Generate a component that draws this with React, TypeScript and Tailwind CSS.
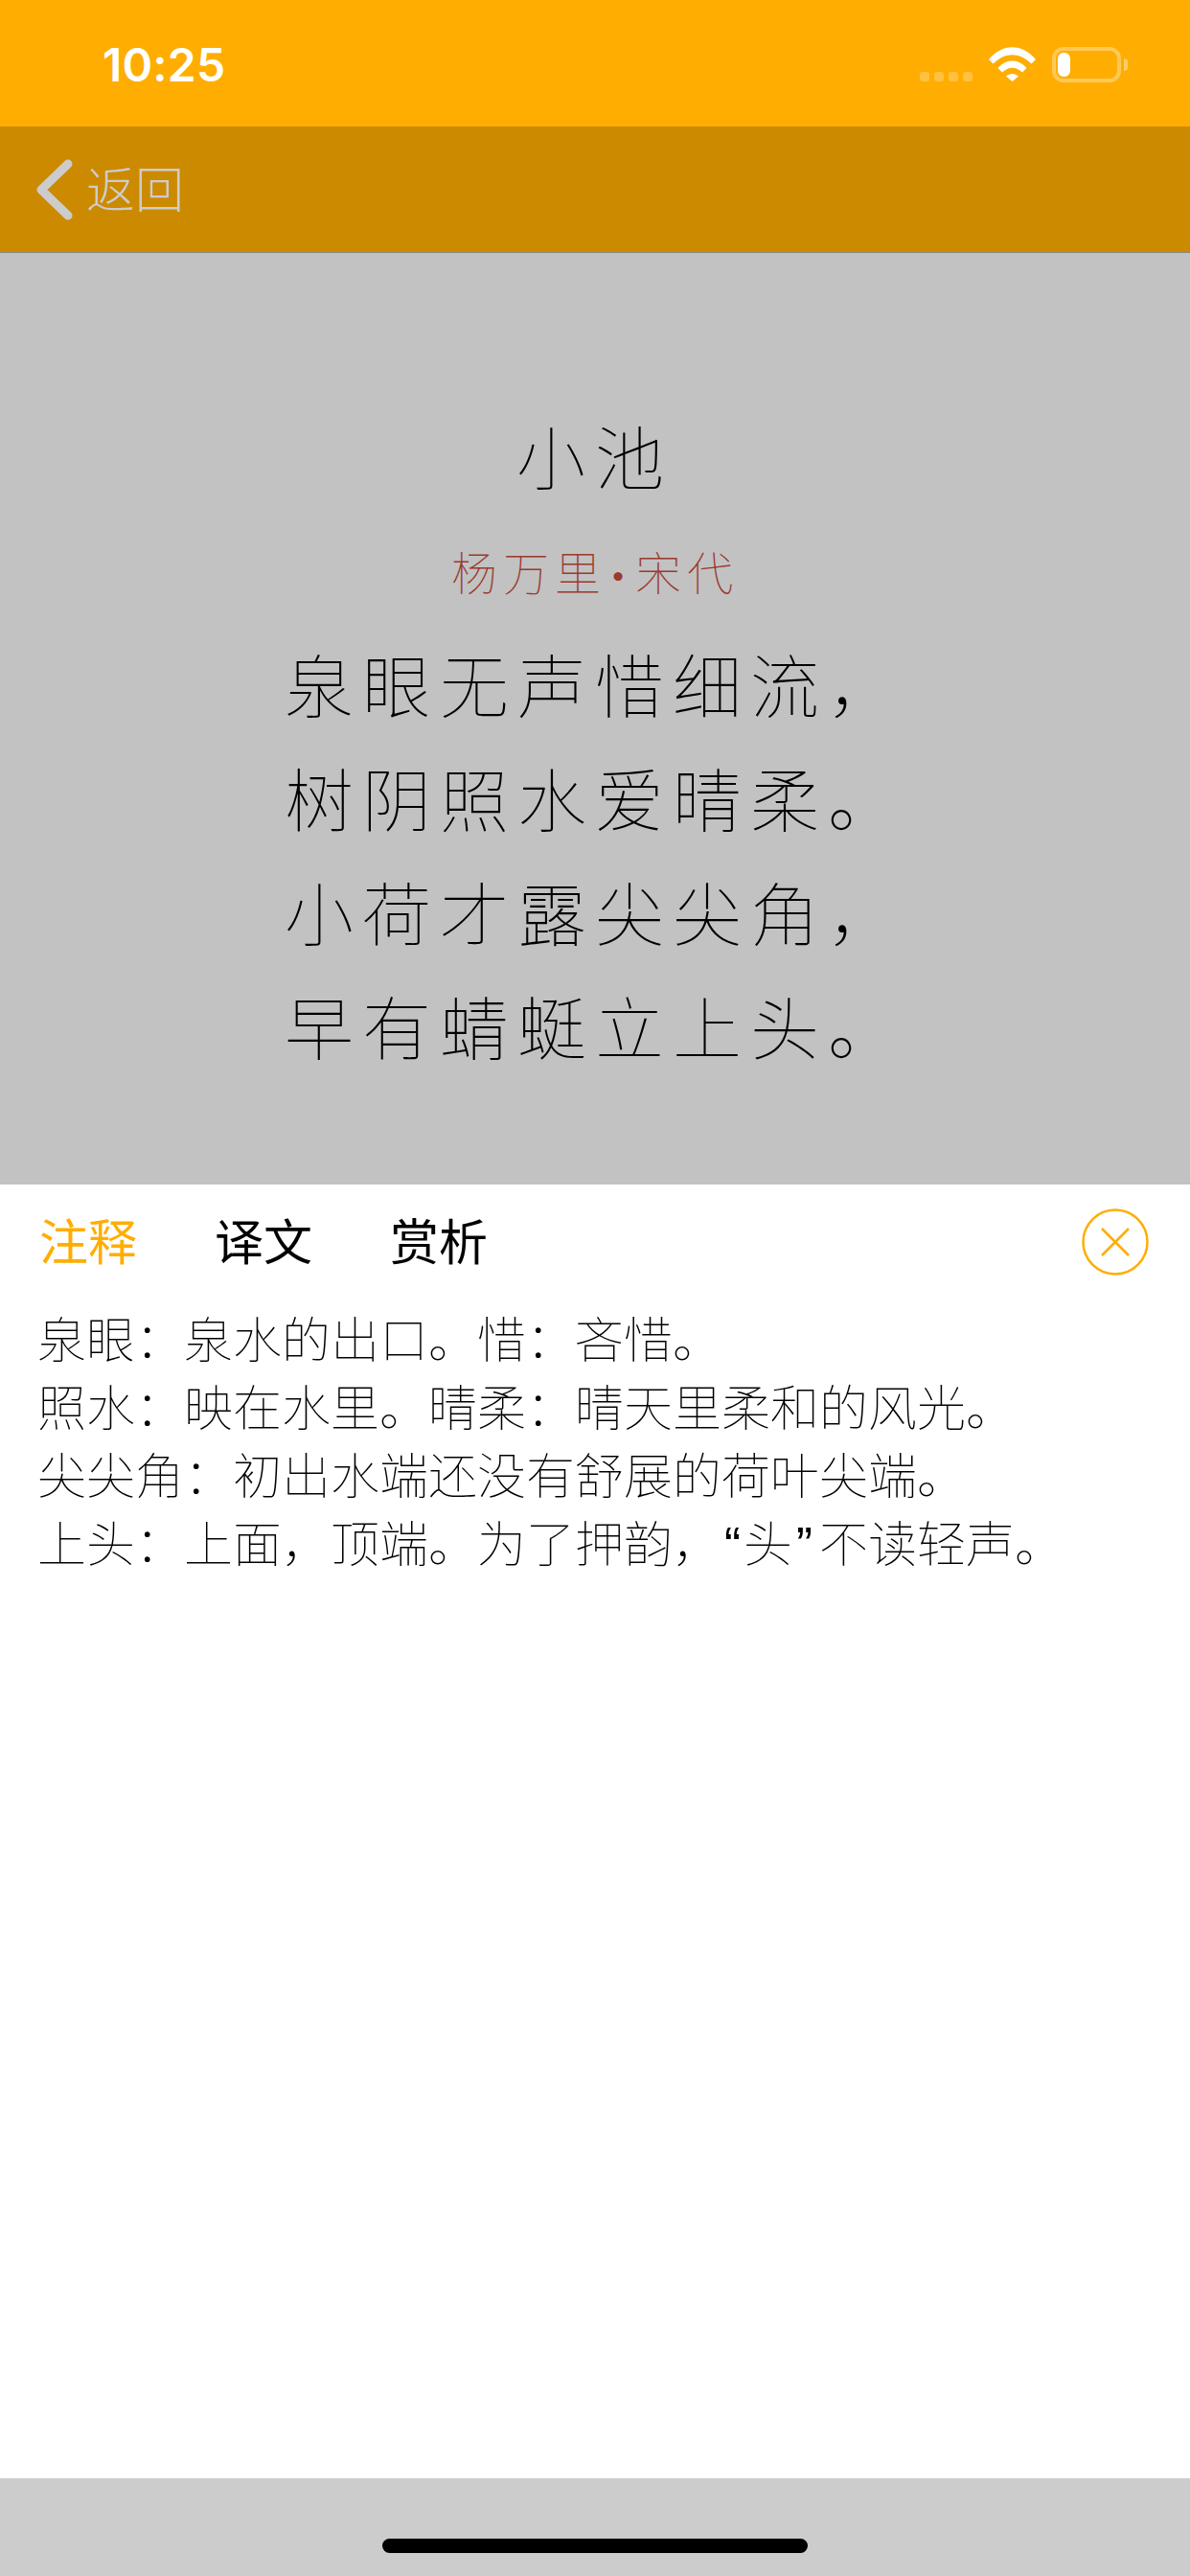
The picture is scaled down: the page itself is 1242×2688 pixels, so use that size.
import React from 'react';

const poemLines = ['泉眼无声惜细流，', '树阴照水爱晴柔。', '小荷才露尖尖角，', '早有蜻蜓立上头。'];
const noteLines = [
  '泉眼：泉水的出口。惜：吝惜。',
  '照水：映在水里。晴柔：晴天里柔和的风光。',
  '尖尖角：初出水端还没有舒展的荷叶尖端。',
];

function StatusBar() {
  return (
    <div className="flex h-[132px] items-start bg-[#ffad00] pl-[107px] pr-[65px] pt-[49px]">
      <span className="font-['Inter',sans-serif] text-[48px] font-semibold leading-[37px] tracking-[0.2px] text-white">10:25</span>
      <div className="ml-auto flex items-start">
        {/* signal dots */}
        <div className="mt-[26px] flex gap-[5px]">
          <div className="h-[10px] w-[10px] rounded-[3px] bg-white/25" />
          <div className="h-[10px] w-[10px] rounded-[3px] bg-white/25" />
          <div className="h-[10px] w-[10px] rounded-[3px] bg-white/25" />
          <div className="h-[10px] w-[10px] rounded-[3px] bg-white/25" />
        </div>
        <svg className="ml-[17px]" width="49" height="36" viewBox="0 0 49 36">
          <path fill="#fff" d="M0 13 C14 -4 35 -4 49 13 L44.500 17.500 C32 5 17 5 4.500 17.500 Z" />
          <path fill="#fff" d="M9.500 22 C18 12 31 12 39.500 22 L35 26.500 C28 20 21 20 14 26.500 Z" />
          <path fill="#fff" d="M18 30.500 C22 27 27 27 31 30.500 L24.500 36 Z" />
        </svg>
        {/* battery */}
        <div className="ml-[17px] h-[37px] w-[72px] rounded-[12px] border-[4px] border-white/35 p-[2px]">
          <div className="h-[25px] w-[13px] rounded-[6px] bg-white" />
        </div>
        <div className="ml-[3px] mt-[12px] h-[13px] w-[4px] rounded-r-[4px] bg-white/40" />
      </div>
    </div>
  );
}

function NavBar() {
  return (
    <div className="flex h-[132px] items-center border-b border-[#8a8a8a] bg-[#cc8a00] pl-[38px] text-[#cccccc]">
      <svg width="38" height="64" viewBox="0 0 38 64">
        <path d="M33 5 L5 32 L33 59" fill="none" stroke="#cccccc" strokeWidth="9" strokeLinecap="round" strokeLinejoin="round" />
      </svg>
      <span className="-mt-[6px] ml-[14px] text-[51px] font-light leading-[60px]">返回</span>
    </div>
  );
}

function Poem() {
  return (
    <div className="flex h-[972px] flex-col items-center bg-[#c2c2c2] pt-[170px] font-thin">
      <div className="text-[72px] leading-[80px] tracking-[10px] text-black">小池</div>
      <div className="mt-[51px] text-[48px] leading-[60px] tracking-[6px] text-[#9a3a2c]">
        杨万里<span className="px-[5.500px] font-['Lato',sans-serif] font-bold">·</span>宋代
      </div>
      <div className="mt-[24px] text-[72px] leading-[119px] tracking-[9px] text-black">
        {poemLines.map((line) => (
          <div key={line}>{line}</div>
        ))}
      </div>
    </div>
  );
}

function Notes() {
  return (
    <div className="h-[1350px] bg-white pl-[41px] pr-[43px] pt-[25px]">
      <div className="flex h-[70px] items-center text-[51px] leading-[60px] text-black">
        <span className="-mt-[6px] text-[#ffad00]">注释</span>
        <span className="-mt-[6px] ml-[81px]">译文</span>
        <span className="-mt-[6px] ml-[81px]">赏析</span>
        <svg className="ml-auto" width="70" height="70" viewBox="0 0 70 70">
          <circle cx="35" cy="35" r="33.500" fill="none" stroke="#ffad00" strokeWidth="2.500" />
          <path d="M21 21 L49 49 M49 21 L21 49" fill="none" stroke="#ffad00" strokeWidth="2.500" />
        </svg>
      </div>
      <div className="-ml-[2px] mt-[29px] text-[51px] font-thin leading-[71px] text-black">
        {noteLines.map((line) => (
          <div key={line} className="whitespace-nowrap">{line}</div>
        ))}
        <div className="whitespace-nowrap">
          上头：上面，顶端。为了押韵，
          <span className="px-[3px] font-['Liberation_Sans',sans-serif]">“</span>头
          <span className="pl-[4px] pr-[7px] font-['Liberation_Sans',sans-serif]">”</span>不读轻声。
        </div>
      </div>
    </div>
  );
}

export default function App() {
  return (
    <div lang="zh-CN" className="flex h-[2688px] w-[1242px] flex-col overflow-hidden font-['Noto_Sans_CJK_SC',sans-serif]">
      <StatusBar />
      <NavBar />
      <Poem />
      <Notes />
      <div className="flex flex-1 justify-center bg-[#cccccc] pt-[63px]">
        <div className="h-[15px] w-[444px] rounded-full bg-black" />
      </div>
    </div>
  );
}
